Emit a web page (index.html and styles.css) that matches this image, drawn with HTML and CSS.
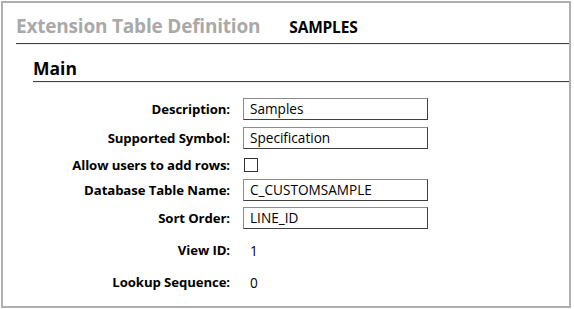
FILE: index.html
```html
<!DOCTYPE html>
<html lang="en">
<head>
  <meta charset="UTF-8" />
  <title>Extension Table Definition</title>
  <link rel="stylesheet" href="styles.css">
</head>
<body>
  <div class="frame">
    <!-- Header -->
    <div class="header">
      <div class="title">Extension Table Definition</div>
      <div class="table-name">SAMPLES</div>
    </div>

    <!-- Main section -->
    <div class="section">
      <div class="section-title">Main</div>
      <div class="form">
        <div class="row">
          <div class="label">Description:</div>
          <div class="field">Samples</div>
        </div>
        <div class="row">
          <div class="label">Supported Symbol:</div>
          <div class="field">Specification</div>
        </div>
        <div class="row row-check">
          <div class="label">Allow users to add rows:</div>
          <div class="checkbox"></div>
        </div>
        <div class="row row-db">
          <div class="label">Database Table Name:</div>
          <div class="field">C_CUSTOMSAMPLE</div>
        </div>
        <div class="row row-info">
          <div class="label">Sort Order:</div>
          <div class="field">LINE_ID</div>
        </div>
        <div class="row row-info">
          <div class="label">View ID:</div>
          <div class="value">1</div>
        </div>
        <div class="row row-info">
          <div class="label">Lookup Sequence:</div>
          <div class="value">0</div>
        </div>
      </div>
    </div>
  </div>
</body>
</html>
```

FILE: styles.css
```css
* {
  margin: 0;
  padding: 0;
  box-sizing: border-box;
}

body {
  font-family: 'Open Sans', 'Liberation Sans', sans-serif;
  background: #fff;
  color: #000;
}

.frame {
  margin: 1px 3px 1px 1px;
  height: 307px;
  border: 2px solid #b0b0b0;
  overflow: hidden;
}

/* Header */
.header {
  margin-left: 13px;
  height: 41px;
  padding-top: 10px;
  display: flex;
  align-items: baseline;
  border-bottom: 1px solid #404040;
  box-shadow: 0 1px 0 #ececec;
}

.title {
  font-size: 19px;
  font-weight: 700;
  color: #a9a9a9;
  line-height: 26px;
  letter-spacing: -0.2px;
}

.table-name {
  margin-left: 29px;
  font-size: 15.5px;
  font-weight: 700;
  letter-spacing: -0.2px;
}

/* Section */
.section {
  margin-left: 30px;
}

.section-title {
  height: 38px;
  padding-top: 12px;
  font-size: 17.5px;
  font-weight: 700;
  line-height: 24px;
  border-bottom: 1px solid #404040;
  box-shadow: 0 1px 0 #ececec;
}

.form {
  margin-top: 12px;
}

.row {
  display: flex;
  align-items: center;
  gap: 13px;
  height: 29px;
}

.row-check { height: 25px; }
.row-db { height: 25px; }
.row-info { height: 32px; }

.label {
  width: 197px;
  text-align: right;
  font-size: 13.2px;
  font-weight: 700;
  letter-spacing: -0.1px;
}

.field {
  width: 185px;
  height: 22px;
  padding: 0 6px;
  border: 1px solid;
  border-color: #8c8c8c #404040 #404040 #8c8c8c;
  font-size: 13.6px;
  line-height: 20px;
}

.checkbox {
  width: 14px;
  height: 14px;
  border: 1px solid #333;
  margin-left: 1px;
}

.value {
  padding-left: 7px;
  font-size: 13.6px;
}
```
